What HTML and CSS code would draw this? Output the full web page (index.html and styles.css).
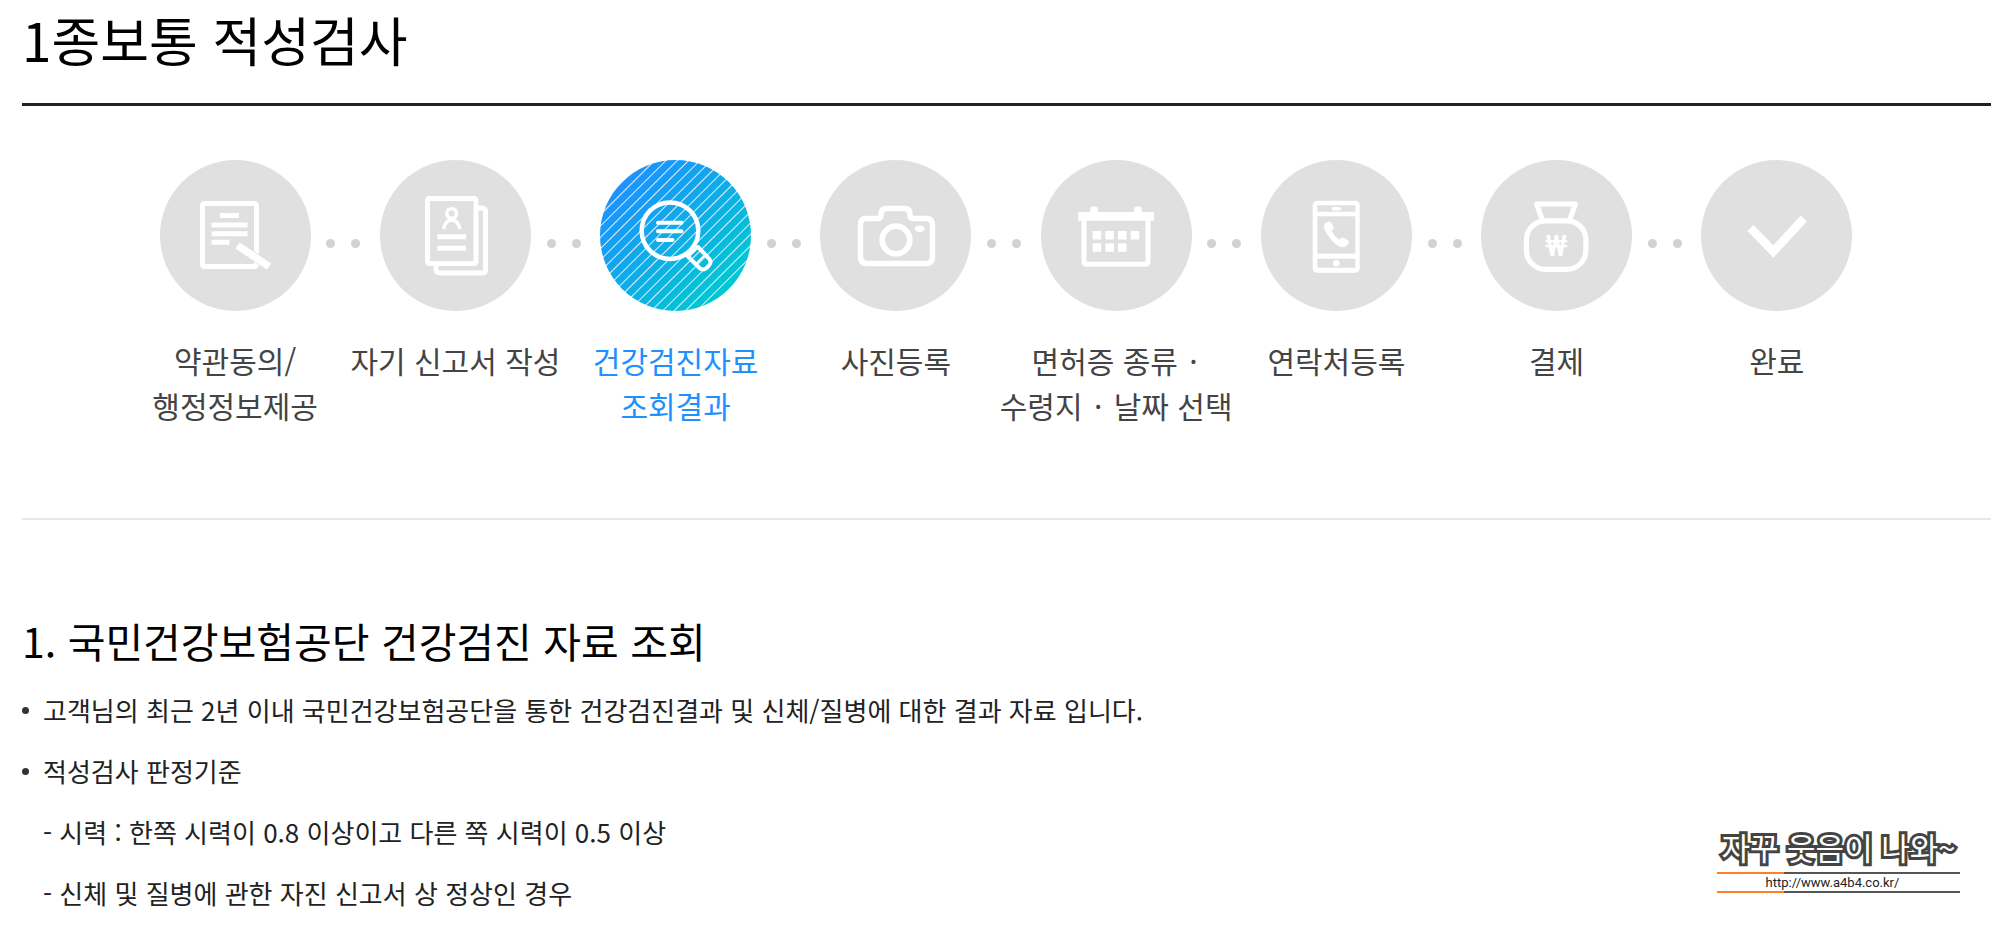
FILE: index.html
```html
<!DOCTYPE html>
<html lang="ko">
<head>
<meta charset="utf-8">
<title>1종보통 적성검사</title>
<link rel="stylesheet" href="styles.css">
</head>
<body>
<main class="page">
  <h1 class="page-title">1종보통 적성검사</h1>

  <ol class="steps">
    <li class="step">
      <div class="step-head">
        <svg class="step-icon" viewBox="0 0 151 151" aria-hidden="true">
          <rect x="42.5" y="43.5" width="54" height="63" rx="2"/>
          <path d="M60 55.500h19M51.500 65h36M51.500 73.700h36M51.500 82.300h18"/>
          <path class="cut" d="M79 86.500l31 20.500" stroke-width="9"/>
          <path d="M77.500 85.500L109 106.500" stroke-width="7.500"/>
        </svg>
        <span class="dots"><i class="dot"></i><i class="dot"></i></span>
      </div>
      <p class="step-label">약관동의/<br>행정정보제공</p>
    </li>
    <li class="step">
      <div class="step-head">
        <svg class="step-icon" viewBox="0 0 151 151" aria-hidden="true">
          <rect x="47.500" y="38.500" width="48.500" height="65" rx="2"/>
          <path d="M98 48h4q3.500 0 3.500 3.500V110q0 3-3.500 3H60q-4 0-4-4v-3"/>
          <circle cx="71.700" cy="53.500" r="4.800" stroke-width="3.500"/>
          <path d="M63.500 69q2-9 8.200-9t8.300 9" stroke-width="3.500"/>
          <path d="M57.300 76.700H86M57.300 88.300H86"/>
        </svg>
        <span class="dots"><i class="dot"></i><i class="dot"></i></span>
      </div>
      <p class="step-label">자기 신고서 작성</p>
    </li>
    <li class="step step-current" aria-current="step">
      <div class="step-head">
        <svg class="step-icon" viewBox="0 0 151 151" aria-hidden="true">
          <circle cx="70" cy="70.700" r="28.300" stroke-width="4.500"/>
          <g stroke-linecap="round" stroke-width="4">
            <path d="M58 62.700h23.500M58 71.300h23.500M58 80h14.500"/>
            <path d="M88 96.500L99.500 108q3.500 3 7 0l2.500-2.500q3-3.500 0-7L98 87"/>
            <path d="M88 96.500l10-9.500" stroke-width="3"/>
            <path d="M96 104l9-9" stroke-width="2"/>
          </g>
        </svg>
        <span class="dots"><i class="dot"></i><i class="dot"></i></span>
      </div>
      <p class="step-label">건강검진자료<br>조회결과</p>
    </li>
    <li class="step">
      <div class="step-head">
        <svg class="step-icon" viewBox="0 0 151 151" aria-hidden="true">
          <path stroke-width="5.500" d="M46 58.500h12q3 0 3-3V54q0-5.500 5.500-5.500h18Q90 48.500 90 54v1.500q0 3 3 3h13q6.500 0 6.500 6.500v32q0 6.500-6.500 6.500H47q-6.500 0-6.500-6.500V65q0-6.500 5.500-6.500z"/>
          <circle cx="76" cy="80" r="13.800" stroke-width="5.800"/>
          <ellipse class="solid" cx="99.700" cy="68.700" rx="4.800" ry="3.200"/>
        </svg>
        <span class="dots"><i class="dot"></i><i class="dot"></i></span>
      </div>
      <p class="step-label">사진등록</p>
    </li>
    <li class="step">
      <div class="step-head">
        <svg class="step-icon" viewBox="0 0 151 151" aria-hidden="true">
          <rect x="43" y="57" width="64" height="47.300" rx="2"/>
          <path class="solid" d="M49.300 52v-3.500q0-2 2-2h3.500q2 0 2 2V52h36.400v-3.500q0-2 2-2h3.500q2 0 2 2V52H113v8.700H37.300V52z"/>
          <path class="solid" d="M51.700 71h8.500v8.500h-8.500zM64.300 71h8.500v8.500h-8.500zM77 71h8.500v8.500H77zM89.700 71h8.500v8.500h-8.500zM51.700 83.300h8.500v8.500h-8.500zM64.300 83.300h8.500v8.500h-8.500zM77 83.300h8.500v8.500H77z"/>
        </svg>
        <span class="dots"><i class="dot"></i><i class="dot"></i></span>
      </div>
      <p class="step-label">면허증 종류 <span class="mid-dot">·</span><br>수령지 <span class="mid-dot">·</span> 날짜 선택</p>
    </li>
    <li class="step">
      <div class="step-head">
        <svg class="step-icon" viewBox="0 0 151 151" aria-hidden="true">
          <rect class="solid" x="51.700" y="40.700" width="47" height="72" rx="4.500"/>
          <rect class="hole" x="56.300" y="45.300" width="38" height="6.400" rx="1"/>
          <rect class="hole" x="56.300" y="56.300" width="38" height="37.300"/>
          <rect class="hole" x="56.300" y="98.800" width="38" height="9" rx="1"/>
          <rect class="solid" x="70.700" y="47" width="9.500" height="3.500" rx="1.500"/>
          <circle class="solid" cx="75.300" cy="103.300" r="3.300"/>
          <path class="solid" d="M67.500 61.500q1.500-.5 2.500 1l2.500 4q.7 1.500-.3 2.500l-1.700 1.500q2.500 6 8 9l2-1.500q1.300-.8 2.500 0l4 2.500q1.500 1 .8 2.500-2.800 5-7.800 4-4.500-1-10-7.500-5.500-6.500-7-12-.8-4.500 4.500-6z"/>
        </svg>
        <span class="dots"><i class="dot"></i><i class="dot"></i></span>
      </div>
      <p class="step-label">연락처등록</p>
    </li>
    <li class="step">
      <div class="step-head">
        <svg class="step-icon" viewBox="0 0 151 151" aria-hidden="true">
          <rect x="45.400" y="60.800" width="59.500" height="48.500" rx="19" stroke-width="5.200"/>
          <path d="M61.500 60L55.500 44h39L88.500 60" stroke-linejoin="round"/>
          <text class="won" x="75.300" y="95.500" text-anchor="middle">₩</text>
        </svg>
        <span class="dots"><i class="dot"></i><i class="dot"></i></span>
      </div>
      <p class="step-label">결제</p>
    </li>
    <li class="step">
      <div class="step-head">
        <svg class="step-icon" viewBox="0 0 151 151" aria-hidden="true">
          <path d="M49.500 68l22.800 23.500 30.500-33" stroke-width="8.500"/>
        </svg>
      </div>
      <p class="step-label">완료</p>
    </li>
  </ol>

  <section class="section">
    <h2 class="section-title">1. 국민건강보험공단 건강검진 자료 조회</h2>
    <ul class="notes">
      <li class="note">고객님의 최근 2년 이내 국민건강보험공단을 통한 건강검진결과 및 신체/질병에 대한 결과 자료 입니다.</li>
      <li class="note">적성검사 판정기준
        <ul class="criteria">
          <li>- 시력 : 한쪽 시력이 0.8 이상이고 다른 쪽 시력이 0.5 이상</li>
          <li>- 신체 및 질병에 관한 자진 신고서 상 정상인 경우</li>
        </ul>
      </li>
    </ul>
  </section>
</main>

<aside class="stamp">
  <p class="stamp-name">자꾸 웃음이 나와~</p>
  <p class="stamp-url">http://www.a4b4.co.kr/</p>
</aside>
</body>
</html>
```
FILE: styles.css
```css
* {
  box-sizing: border-box;
}

body {
  margin: 0;
  background: #fff;
  color: #222;
  font-family: "Noto Sans CJK KR", sans-serif;
  overflow: hidden;
}

h1, h2, p, ul, ol {
  margin: 0;
  padding: 0;
  font-weight: 400;
  list-style: none;
}

.page {
  padding: 0 9px 0 22px;
}

.page-title {
  padding-bottom: 25px;
  border-bottom: 3px solid #222;
  color: #000;
  font-size: 53px;
  line-height: 78px;
}

.steps {
  display: grid;
  grid-template-columns: repeat(8, 1fr);
  padding: 54px 104px 90px 103px;
  border-bottom: 2px solid #e8e8e8;
}

.step-head {
  display: grid;
  grid-template-columns: 1fr 151px 1fr;
  align-items: center;
}

.step-icon {
  grid-column: 2;
  display: block;
  width: 151px;
  height: 151px;
  border-radius: 50%;
  background: #e0e0e0;
  fill: none;
  stroke: #fff;
  stroke-width: 5;
}

.step-icon .solid {
  fill: #fff;
  stroke: none;
}

.step-icon .hole {
  fill: #e0e0e0;
  stroke: none;
}

.step-icon .cut {
  stroke: #e0e0e0;
}

.won {
  fill: #fff;
  stroke: none;
  font-family: Roboto, sans-serif;
  font-size: 29px;
  font-weight: 500;
}

.step-current .step-icon {
  background:
    repeating-linear-gradient(135deg, transparent 0 6px, rgba(255, 255, 255, .85) 7px, transparent 8px),
    linear-gradient(135deg, #1e90ff 12%, #00cad0 88%);
}

.dots {
  display: flex;
  justify-content: space-between;
  justify-self: end;
  width: 34px;
  margin: 16px -15px 0 0;
}

.dot {
  width: 9px;
  height: 9px;
  border-radius: 50%;
  background: #d2d2d2;
}

.step-label {
  margin: 27px -20px 0;
  color: #444;
  font-size: 30px;
  line-height: 45px;
  text-align: center;
}

.step-current .step-label {
  color: #1e90ff;
}

.mid-dot {
  padding: 0 3px;
}

.section {
  padding-top: 91px;
}

.section-title {
  color: #000;
  font-size: 41px;
  line-height: 58px;
}

.notes {
  padding-top: 10px;
  font-size: 26px;
  line-height: 61px;
}

.note {
  position: relative;
  padding-left: 21px;
}

.note::before {
  content: "";
  position: absolute;
  top: 28px;
  left: 0;
  width: 7px;
  height: 7px;
  border-radius: 50%;
  background: #333;
}

.stamp {
  position: absolute;
  right: 40px;
  bottom: 34px;
  width: 243px;
}

.stamp-name {
  color: #fff;
  font-size: 31px;
  font-weight: 400;
  line-height: 50px;
  text-align: center;
  white-space: nowrap;
  -webkit-text-stroke: 6px #444;
  paint-order: stroke fill;
}

.stamp-url {
  border: solid;
  border-width: 2px 0;
  border-image: linear-gradient(to right, #ff7f27 28%, #555 28%) 2;
  padding-right: 12px;
  color: #222;
  font-family: Roboto, sans-serif;
  font-size: 13px;
  line-height: 17px;
  text-align: center;
}
```
